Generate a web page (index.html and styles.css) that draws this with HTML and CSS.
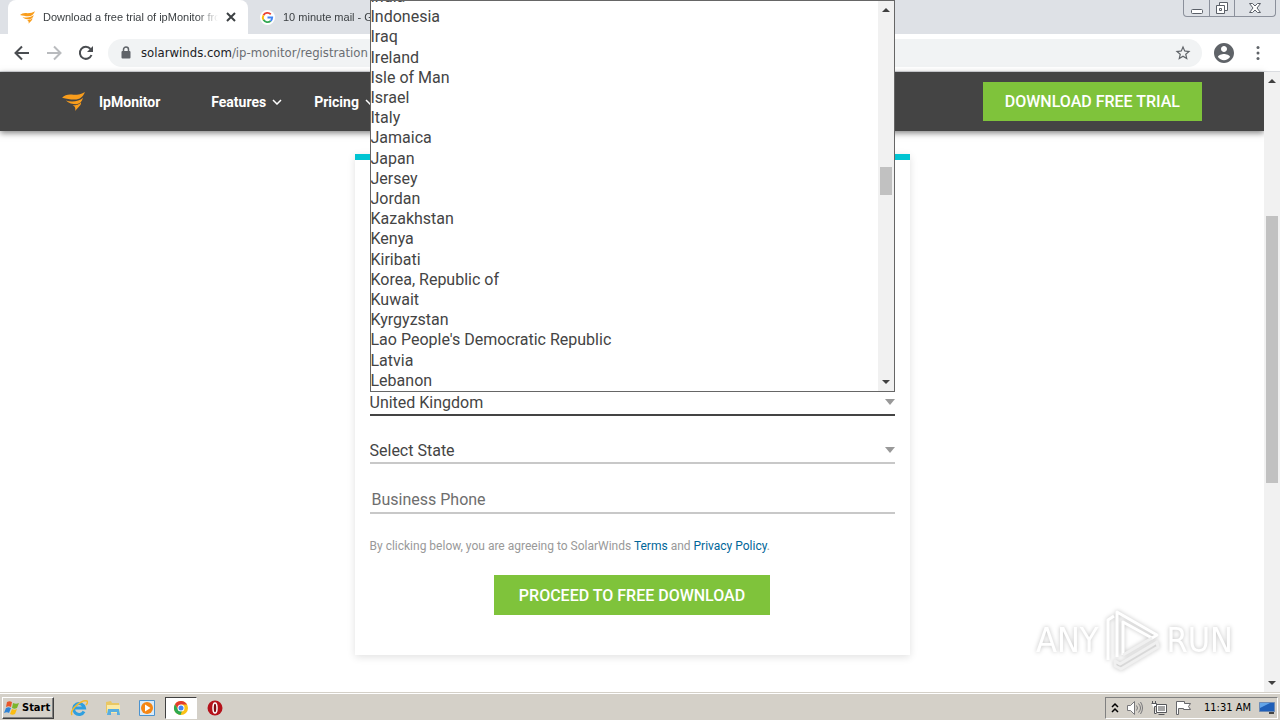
FILE: index.html
```html
<!doctype html>
<html lang="en">

<head>
  <meta charset="UTF-8" />
  <meta name="viewport" content="width=device-width, initial-scale=1.0" />
  <title>Download a free trial of ipMonitor</title>
  <link rel="stylesheet" href="styles.css">
</head>

<body>
  <div class="tabs">
    <div class="tab tab-active">
      <svg class="tab-icon" viewBox="0 0 24 20">
        <path fill="#f99d1c" d="M0 6c3-3 7-4 12-3 5 0 9-1 12-3-2 5-5 8-11 8-5 0-8-1-13-2zM4 9c6 2 14 1 18-3-1 4-3 6-7 7-4 0-8-1-11-4zM11 14c4 0 7-1 9-3 0 4-4 5-6 9 0-3 0-5-3-6z" />
      </svg>
      <span class="tab-title">Download a free trial of ipMonitor from</span>
      <button class="tab-close" aria-label="Close tab">
        <svg viewBox="0 0 10 10" width="10" height="10"><path d="M1 1l8 8M9 1l-8 8" stroke="#3c4043" stroke-width="2" /></svg>
      </button>
    </div>
    <div class="tab">
      <svg class="tab-icon" viewBox="0 0 16 16">
        <circle cx="8" cy="8" r="8" fill="#fff" />
        <g fill="none" stroke-width="2">
          <path stroke="#ea4335" d="M3.700 5.500A5 5 0 0 1 11.500 4.500" />
          <path stroke="#fbbc05" d="M3.700 5.500A5 5 0 0 0 3.700 10.500" />
          <path stroke="#34a853" d="M3.700 10.500A5 5 0 0 0 11.300 11.700" />
          <path stroke="#4285f4" d="M8 8h5a5 5 0 0 1-1.700 3.700" />
        </g>
      </svg>
      <span class="tab-title">10 minute mail - Google Search</span>
    </div>
    <div class="window-buttons">
      <button aria-label="Minimize">
        <svg viewBox="0 0 14 14" width="14" height="14"><rect x="1.500" y="8.500" width="11" height="4" rx="1" fill="#fff" stroke="#5b6069" /></svg>
      </button>
      <button aria-label="Restore">
        <svg viewBox="0 0 14 14" width="14" height="14" fill="#fff" stroke="#5b6069"><path d="M4.500 1.500h8v8h-8z" /><path d="M1.500 4.500h8v8h-8z" /><path d="M4.500 7.500h2v2h-2z" /></svg>
      </button>
      <button class="wide" aria-label="Close">
        <svg viewBox="0 0 14 14" width="14" height="14"><path d="M1.500 2.500h3L7 5l2.500-2.500h3L9 7l3.500 4.500h-3L7 9l-2.500 2.500h-3L5 7z" fill="#fff" stroke="#5b6069" /></svg>
      </button>
    </div>
  </div>

  <div class="toolbar">
    <button class="tool" aria-label="Back"><svg viewBox="0 0 16 16"><path d="M15 8H2M8 1.500L1.500 8 8 14.500" stroke="#4a4d51" stroke-width="2" fill="none" /></svg></button>
    <button class="tool" aria-label="Forward"><svg viewBox="0 0 16 16"><path d="M1 8h13M8 1.500L14.500 8 8 14.500" stroke="#b9bbbe" stroke-width="2" fill="none" /></svg></button>
    <button class="tool" aria-label="Reload"><svg viewBox="0 0 16 16"><path d="M13.500 10A6 6 0 1 1 12.500 4" stroke="#4a4d51" stroke-width="2" fill="none" /><path d="M15 1v6H9z" fill="#4a4d51" /></svg></button>
    <div class="address">
      <svg class="lock" viewBox="0 0 10 13"><path d="M2.500 6V3.500a2.500 2.500 0 0 1 5 0V6" stroke="#5f6368" stroke-width="1.500" fill="none" /><rect x="0.500" y="5" width="9" height="7.500" rx="1" fill="#5f6368" /></svg>
      <span class="url"><b>solarwinds.com</b>/ip-monitor/registration</span>
      <svg class="star" viewBox="0 0 24 24"><path fill="#5f6368" d="M22 9.240l-7.190-.62L12 2 9.190 8.630 2 9.240l5.460 4.730L5.820 21 12 17.270 18.180 21l-1.630-7.030L22 9.240zM12 15.400l-3.760 2.270 1-4.280-3.320-2.880 4.380-.38L12 6.100l1.710 4.040 4.380.38-3.320 2.880 1 4.280L12 15.400z" /></svg>
    </div>
    <button class="tool profile" aria-label="Profile"><svg viewBox="2 2 20 20"><path fill="#5f6368" d="M12 2C6.480 2 2 6.480 2 12s4.480 10 10 10 10-4.480 10-10S17.520 2 12 2zm0 3c1.660 0 3 1.340 3 3s-1.340 3-3 3-3-1.340-3-3 1.340-3 3-3zm0 14.200c-2.500 0-4.710-1.280-6-3.220.03-1.990 4-3.080 6-3.080 1.990 0 5.970 1.090 6 3.080-1.290 1.940-3.500 3.220-6 3.220z" /></svg></button>
    <button class="tool" aria-label="Menu"><svg viewBox="0 0 16 16" fill="#5f6368"><circle cx="8" cy="2.500" r="1.500" /><circle cx="8" cy="8" r="1.500" /><circle cx="8" cy="13.500" r="1.500" /></svg></button>
  </div>

  <div class="viewport">
    <div class="page">
      <header class="site-nav">
        <a class="brand" href="#">
          <svg class="logo" viewBox="0 0 24 20">
            <path fill="#f99d1c" d="M0 6c3-3 7-4 12-3 5 0 9-1 12-3-2 5-5 8-11 8-5 0-8-1-13-2zM4 9c6 2 14 1 18-3-1 4-3 6-7 7-4 0-8-1-11-4zM11 14c4 0 7-1 9-3 0 4-4 5-6 9 0-3 0-5-3-6z" />
          </svg>
          IpMonitor
        </a>
        <a class="nav-link" href="#">Features <svg class="chevron" viewBox="0 0 10 6"><path d="M1 1l4 4 4-4" /></svg></a>
        <a class="nav-link" href="#">Pricing <svg class="chevron" viewBox="0 0 10 6"><path d="M1 1l4 4 4-4" /></svg></a>
        <button class="btn btn-trial">DOWNLOAD FREE TRIAL</button>
      </header>

      <form class="card">
        <div class="field field-open">
          <select aria-label="Country">
            <option>United Kingdom</option>
          </select>
          <!-- open country list -->
          <div class="popup">
            <ul class="options" role="listbox" aria-label="Countries">
              <li role="option">India</li>
              <li role="option">Indonesia</li>
              <li role="option">Iraq</li>
              <li role="option">Ireland</li>
              <li role="option">Isle of Man</li>
              <li role="option">Israel</li>
              <li role="option">Italy</li>
              <li role="option">Jamaica</li>
              <li role="option">Japan</li>
              <li role="option">Jersey</li>
              <li role="option">Jordan</li>
              <li role="option">Kazakhstan</li>
              <li role="option">Kenya</li>
              <li role="option">Kiribati</li>
              <li role="option">Korea, Republic of</li>
              <li role="option">Kuwait</li>
              <li role="option">Kyrgyzstan</li>
              <li role="option">Lao People's Democratic Republic</li>
              <li role="option">Latvia</li>
              <li role="option">Lebanon</li>
            </ul>
            <div class="scrollbar">
              <i class="arrow-up"></i>
              <div class="track track-list"><div class="thumb"></div></div>
              <i class="arrow-down"></i>
            </div>
          </div>
        </div>
        <div class="field">
          <select aria-label="State">
            <option>Select State</option>
          </select>
        </div>
        <div class="field field-phone">
          <input type="tel" placeholder="Business Phone" aria-label="Business Phone" />
        </div>
        <p class="legal">By clicking below, you are agreeing to SolarWinds <a href="#">Terms</a> and <a href="#">Privacy Policy</a>.</p>
        <button class="btn btn-proceed" type="button">PROCEED TO FREE DOWNLOAD</button>
      </form>
    </div>
    <div class="scrollbar">
      <i class="arrow-up"></i>
      <div class="track track-page"><div class="thumb"></div></div>
      <i class="arrow-down"></i>
    </div>

    <div class="watermark">
      <span>ANY</span>
      <svg viewBox="0 0 56 64" width="56" height="64" fill="none" stroke="#fff" stroke-width="3" stroke-linejoin="round">
        <path d="M4 52V12l6-4" />
        <path d="M13 49V4l40 23-5 3-29-16v33" />
        <path stroke="#f0f0f0" d="M19 47l29-17M53 34L16 56l-5-3v5l6 3 37-22z" />
      </svg>
      <span>RUN</span>
    </div>
  </div>

  <div class="taskbar">
    <button class="start">
      <svg viewBox="0 0 18 16" width="18" height="16">
        <path fill="#e8562a" d="M4 2c2-1 3-1 5 0L8 7C6 6 5 6 3 7z" />
        <path fill="#7cb52b" d="M10 3c2 1 4 1 6 0l-2 5c-2 1-3 1-5 0z" />
        <path fill="#2f83d6" d="M3 8c2-1 3-1 5 0l-2 5c-1-1-3-1-5 0z" />
        <path fill="#fbbd12" d="M9 9c2 1 3 1 5 0l-2 5c-2 1-3 1-5 0z" />
      </svg>
      Start
    </button>
    <button class="task" aria-label="Internet Explorer">
      <svg viewBox="0 0 18 18"><path d="M14 12.500A5.500 5.500 0 1 1 14.500 9H5" fill="none" stroke="#2f9fdf" stroke-width="3" /><path d="M2 16C-1 11 12 0 17 2c1 1 0 3-1 4" fill="none" stroke="#f3b92b" stroke-width="1.500" /></svg>
    </button>
    <button class="task" aria-label="Explorer">
      <svg viewBox="0 0 18 18"><path fill="#e9c764" d="M2 3l5-1 1 2h7v10H2z" /><path fill="#fbeaa5" d="M3 6h13v8H3z" /><path fill="#58aee0" d="M4 10h11l1 6h-3v-3H7v3H3z" /></svg>
    </button>
    <button class="task" aria-label="Media Player">
      <svg viewBox="0 0 18 18"><path fill="#d9ebfa" stroke="#4b93cf" d="M1.500 1.500h15v15h-15z" /><circle cx="9" cy="9" r="6" fill="#f58614" /><path fill="#fff" d="M7 5.500v7L12.500 9z" /></svg>
    </button>
    <button class="task task-active" aria-label="Chrome">
      <svg viewBox="0 0 18 18"><circle cx="9" cy="9" r="7" fill="#fbc116" /><path fill="#e33b2e" d="M3 5.300A7 7 0 0 1 15.100 5.500H9L6 10.500z" /><path fill="#2da94f" d="M3 5.300L6.500 11.500 10 12 8.500 16A7 7 0 0 1 3 5.300z" /><circle cx="9" cy="9" r="3.500" fill="#fff" /><circle cx="9" cy="9" r="2.500" fill="#4285f4" /></svg>
    </button>
    <button class="task" aria-label="Opera">
      <svg viewBox="0 0 18 18"><circle cx="9" cy="9" r="7.500" fill="#b5121b" /><ellipse cx="9" cy="9" rx="2" ry="5" fill="#7d0b11" stroke="#fff" stroke-width="1.500" /></svg>
    </button>
    <div class="tray">
      <svg viewBox="0 0 8 12" width="8" height="12"><path d="M1 5l3-3 3 3M1 10l3-3 3 3" fill="none" stroke="#000" stroke-width="1.500" /></svg>
      <svg viewBox="0 0 16 16" width="16" height="16" fill="none" stroke="#77777a"><path fill="#fff" d="M.5 5.500h3l4-4v13l-4-4h-3z" /><path d="M9.500 5.500q2 2.500 0 5M11.500 3.500q4 4.500 0 9M13.500 2q4 6 0 12" /></svg>
      <svg viewBox="0 0 16 16" width="16" height="16"><path fill="#fff" stroke="#55565a" d="M5.500 4.500h10v8h-10zM7.500 14.500h6" /><path fill="#a5a5a5" d="M7 6h7v5H7z" /><path fill="#fff" stroke="#55565a" d="M.5 3.500h5v3h-2v7h2M1.500 3V1M4.500 3V1" /></svg>
      <svg viewBox="0 0 16 16" width="16" height="16"><path fill="#fff" stroke="#66676b" d="M1.500 1.500h8v2h6l-2 3 2 3h-7v-1h-5v6h-2z" /></svg>
      <span class="clock">11:31 AM</span>
      <svg viewBox="0 0 16 14" width="16" height="14"><path fill="#1f5fb8" stroke="#6d8bb5" d="M.5 1.500h15v9H.5z" /><path fill="#62a4e8" d="M1 2h10L1 7z" /><path fill="#444" d="M10 11h5v2h-5z" /></svg>
    </div>
  </div>
</body>

</html>
```
FILE: styles.css
```css
* {
  box-sizing: border-box;
}

body {
  display: flex;
  flex-direction: column;
  height: 100vh;
  margin: 0;
  overflow: hidden;
  background: #fff;
  color: #444;
  font-family: Roboto, sans-serif;
  font-size: 16px;
}

button {
  padding: 0;
  border: 0;
  background: none;
  font-family: inherit;
}

a {
  text-decoration: none;
}

svg {
  flex: none;
}

/* browser tabs */
.tabs {
  display: flex;
  height: 34px;
  background: #dee1e6;
  color: #3c4043;
  font-family: "Liberation Sans", sans-serif;
  font-size: 11px;
}

.tab {
  display: flex;
  align-items: center;
  gap: 8px;
  width: 240px;
  padding: 0 12px;
}

.tab-active {
  margin-left: 8px;
  border-radius: 8px 8px 0 0;
  background: #fff;
}

.tab-icon {
  width: 15px;
  height: 15px;
}

.tab-title {
  flex: 1;
  overflow: hidden;
  white-space: nowrap;
  mask-image: linear-gradient(to right, #000 88%, transparent);
}

.tab-close {
  display: flex;
}

.window-buttons {
  display: flex;
  height: 17px;
  margin-left: auto;
  margin-right: 4px;
  border: 1px solid #8b909b;
  border-top: 0;
  border-radius: 0 0 4px 4px;
}

.window-buttons button {
  display: flex;
  align-items: center;
  justify-content: center;
  width: 25px;
}

.window-buttons button + button {
  border-left: 1px solid #8b909b;
}

.window-buttons .wide {
  width: 41px;
}

/* address bar */
.toolbar {
  display: flex;
  align-items: center;
  gap: 16px;
  height: 38px;
  padding: 0 14px;
  border-bottom: 1px solid #dadce0;
}

.tool {
  display: flex;
}

.tool svg {
  width: 16px;
  height: 16px;
}

.profile svg {
  width: 20px;
  height: 20px;
}

.address {
  display: flex;
  flex: 1;
  align-items: center;
  gap: 10px;
  height: 28px;
  margin: 0 -4px 0 -2px;
  padding: 0 10px 0 13px;
  border-radius: 14px;
  background: #f1f3f4;
}

.lock {
  width: 10px;
  height: 13px;
}

.star {
  width: 18px;
  height: 18px;
}

.url {
  flex: 1;
  color: #6a6e73;
  font-family: "DejaVu Sans Condensed", "DejaVu Sans", sans-serif;
  font-size: 13px;
}

.url b {
  color: #202124;
  font-weight: 400;
}

/* page */
.viewport {
  position: relative;
  display: flex;
  flex: 1;
  min-height: 0;
}

.page {
  flex: 1;
}

.site-nav {
  display: flex;
  align-items: center;
  height: 59px;
  padding: 0 62px;
  background: #444;
  box-shadow: 0 2px 6px rgba(0, 0, 0, .5);
  font-size: 14px;
  font-weight: 700;
}

.brand {
  display: flex;
  align-items: center;
  gap: 14px;
  margin-right: 51px;
  color: #fff;
}

.logo {
  width: 23px;
  height: 19px;
}

.nav-link {
  display: flex;
  align-items: center;
  gap: 6px;
  margin-right: 32px;
  color: #fff;
}

.chevron {
  width: 10px;
  height: 6px;
  fill: none;
  stroke: #fff;
  stroke-width: 1.5;
}

.btn {
  background: #7fc33b;
  color: #fff;
  font-size: 16px;
  font-weight: 500;
}

.btn-trial {
  height: 39px;
  margin-left: auto;
  padding: 0 22px;
}

.card {
  display: flex;
  flex-direction: column;
  width: 555px;
  margin: 23px auto 0;
  padding: 232px 15px 40px;
  border-top: 6px solid #00c4d2;
  box-shadow: 0 2px 8px rgba(0, 0, 0, .12);
}

.field {
  position: relative;
  height: 24px;
  margin-bottom: 24px;
  border-bottom: 2px solid #c8c8c8;
}

.field-open {
  border-color: #444;
}

.field-phone {
  height: 26px;
}

.field select,
.field input {
  width: 100%;
  height: 22px;
  padding: 0;
  border: 0;
  outline: 0;
  background: none;
  color: #444;
  font: 16px/20px Roboto, sans-serif;
  appearance: none;
}

.field input {
  padding: 0 2px;
}

.field input::placeholder {
  color: #6e6e6e;
}

.field:not(.field-phone)::after {
  content: "";
  position: absolute;
  top: 7px;
  right: 0;
  border: 5px solid transparent;
  border-top: 6px solid #999;
  border-bottom: 0;
}

.popup {
  position: absolute;
  z-index: 2;
  right: 0;
  bottom: 100%;
  left: 0;
  display: flex;
  align-items: flex-end;
  height: 392px;
  overflow: hidden;
  border: 1px solid #666;
  background: #fff;
}

.options {
  display: grid;
  flex: 1;
  grid-auto-rows: 1fr;
  align-items: center;
  height: 404px;
  margin: 0;
  padding: 0;
  list-style: none;
  line-height: 20px;
}

.scrollbar {
  display: flex;
  flex-direction: column;
  align-items: center;
  align-self: stretch;
  justify-content: space-between;
  width: 16px;
  padding: 7px 0;
  background: #f1f1f1;
}

.arrow-up,
.arrow-down {
  border: 4px solid transparent;
}

.arrow-up {
  border-top: 0;
  border-bottom-color: #404040;
}

.arrow-down {
  border-top-color: #404040;
  border-bottom: 0;
}

.track {
  display: flex;
  flex: 1;
  flex-direction: column;
  width: 12px;
}

.track::before {
  content: "";
}

.track .thumb {
  background: #c1c1c1;
}

.track-list::before {
  flex: 155;
}

.track-list .thumb {
  flex: 28;
}

.track-list::after {
  content: "";
  flex: 185;
}

.track-page::before {
  flex: 133;
}

.track-page .thumb {
  flex: 267;
}

.track-page::after {
  content: "";
  flex: 198;
}

.legal {
  margin: 0 0 21px;
  color: #999;
  font-size: 12px;
  line-height: 16px;
}

.legal a {
  color: #006699;
}

.btn-proceed {
  align-self: center;
  height: 40px;
  padding: 0 25px;
}

.watermark {
  position: absolute;
  right: 47px;
  bottom: 20px;
  display: flex;
  align-items: center;
  gap: 6px;
  color: #fff;
  filter: drop-shadow(0 0 2px rgba(0, 0, 0, .25));
  font-family: "DejaVu Sans Condensed", "DejaVu Sans", sans-serif;
  font-size: 34px;
}

/* taskbar */
.taskbar {
  display: flex;
  align-items: center;
  height: 28px;
  padding: 2px 2px 0;
  border-top: 1px solid #d4d0c8;
  background: #d4d0c8;
  box-shadow: inset 0 1px #fff;
  color: #000;
  font-family: "DejaVu Sans Condensed", "DejaVu Sans", sans-serif;
  font-size: 11px;
}

.start {
  display: flex;
  align-items: center;
  gap: 1px;
  width: 52px;
  height: 22px;
  margin-right: 9px;
  border: 1px solid;
  border-color: #fff #404040 #404040 #fff;
  box-shadow: inset -1px -1px #808080;
  font-size: 11px;
  font-weight: 700;
}

.task {
  display: flex;
  align-items: center;
  justify-content: center;
  width: 32px;
  height: 22px;
  margin-right: 2px;
}

.task svg {
  width: 18px;
  height: 18px;
}

.task-active {
  border: 1px solid;
  border-color: #404040 #fff #fff #404040;
  background: #fff;
}

.tray {
  display: flex;
  align-items: center;
  gap: 8px;
  height: 22px;
  margin-left: auto;
  padding: 0 2px 0 5px;
  border: 1px solid;
  border-color: #808080 #fff #fff #808080;
}

.clock {
  margin-left: 5px;
}
```
